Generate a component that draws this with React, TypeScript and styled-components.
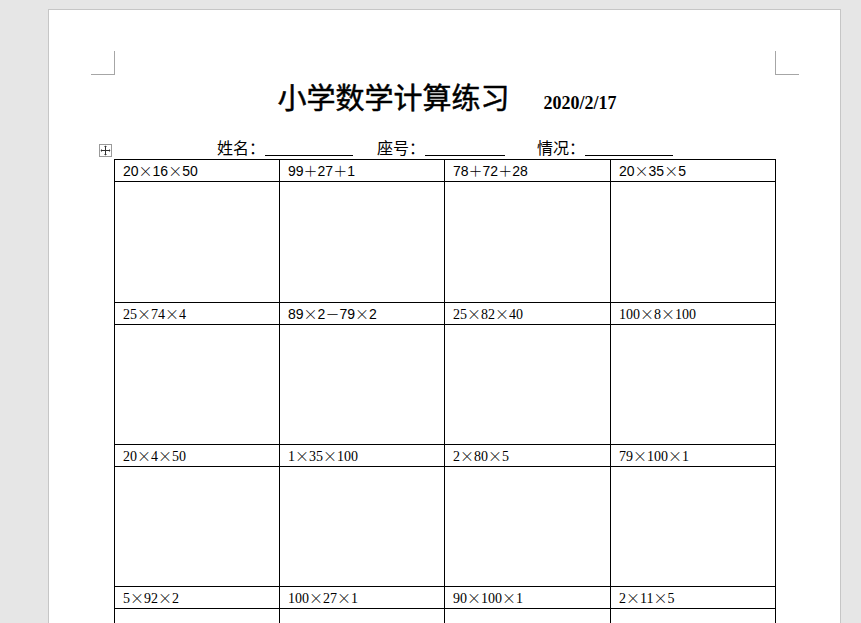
import React from "react";
import styled, { createGlobalStyle } from "styled-components";

const GlobalStyle = createGlobalStyle`
  html, body {
    margin: 0;
    padding: 0;
    background: #e6e6e6;
    overflow: hidden;
  }
  body {
    font-family: "Liberation Serif", "Noto Sans CJK SC", serif;
    color: #000;
  }
`;

const Viewport = styled.div`
  padding: 9px 0 0 48px;
  height: 623px;
  box-sizing: border-box;
`;

const Page = styled.div`
  position: relative;
  width: 793px;
  min-height: 700px;
  box-sizing: border-box;
  background: #fff;
  border: 1px solid #c6c6c6;
  padding: 67px 64px 0 65px;
`;

const CornerMark = styled.div<{ $side: "left" | "right" }>`
  position: absolute;
  top: 41px;
  left: ${(p) => (p.$side === "left" ? "42px" : "726px")};
  width: 23px;
  height: 23px;
  border-bottom: 1px solid #a6a6a6;
  ${(p) =>
    p.$side === "left"
      ? "border-right: 1px solid #a6a6a6;"
      : "border-left: 1px solid #a6a6a6;"}
`;

const TitleRow = styled.div`
  display: flex;
  justify-content: center;
  align-items: baseline;
  height: 40px;
  line-height: 38px;
  padding-left: 4px;
`;

const Title = styled.span`
  font-family: "Noto Sans CJK SC", sans-serif;
  font-weight: 400;
  font-size: 29px;
  -webkit-text-stroke: 0.5px #000;
`;

const DateText = styled.span`
  margin-left: 34px;
  font-family: "Liberation Serif", serif;
  font-weight: 700;
  font-size: 18px;
`;

const InfoRow = styled.div`
  margin-top: 20px;
  display: flex;
  justify-content: center;
  align-items: flex-start;
  height: 22px;
`;

const Label = styled.span<{ $gap?: number }>`
  font-family: "Noto Sans CJK SC", sans-serif;
  font-size: 16px;
  line-height: 20px;
  width: 48px;
  margin-left: ${(p) => p.$gap ?? 0}px;
`;

const Blank = styled.span<{ $w: number }>`
  display: inline-block;
  width: ${(p) => p.$w}px;
  height: 18px;
  border-bottom: 1px solid #000;
`;

const TableWrap = styled.div`
  position: relative;
`;

const MoveHandle = styled.div`
  position: absolute;
  left: -15px;
  top: -15px;
  width: 13px;
  height: 13px;
  box-sizing: border-box;
  border: 1px solid #9a9a9a;
  background: #fff;
  display: flex;
  align-items: center;
  justify-content: center;
`;

const Grid = styled.div`
  display: grid;
  grid-template-columns: 165px 165px 166px 165px;
  border-left: 1px solid #000;
  border-top: 1px solid #000;
`;

const HeadCell = styled.div<{ $sans: boolean }>`
  height: 22px;
  box-sizing: border-box;
  border-right: 1px solid #000;
  border-bottom: 1px solid #000;
  padding: 0 0 0 8px;
  line-height: 20px;
  font-size: 14px;
  white-space: nowrap;
  font-family: ${(p) =>
    p.$sans
      ? `"Liberation Sans", "Noto Sans CJK SC", sans-serif`
      : `"Liberation Serif", "Noto Sans CJK SC", serif`};
`;

const BodyCell = styled.div<{ $h: number }>`
  height: ${(p) => p.$h}px;
  box-sizing: border-box;
  border-right: 1px solid #000;
  border-bottom: 1px solid #000;
`;

const Op = styled.span`
  display: inline-block;
  width: 14px;
  text-align: center;
  font-family: "Noto Sans CJK SC", sans-serif;
  font-weight: 300;
  font-size: 14px;
`;

type Item = { expr: string; sans: boolean };

const rows: Item[][] = [
  [
    { expr: "20×16×50", sans: true },
    { expr: "99＋27＋1", sans: true },
    { expr: "78＋72＋28", sans: true },
    { expr: "20×35×5", sans: true },
  ],
  [
    { expr: "25×74×4", sans: false },
    { expr: "89×2－79×2", sans: true },
    { expr: "25×82×40", sans: false },
    { expr: "100×8×100", sans: false },
  ],
  [
    { expr: "20×4×50", sans: false },
    { expr: "1×35×100", sans: false },
    { expr: "2×80×5", sans: false },
    { expr: "79×100×1", sans: false },
  ],
  [
    { expr: "5×92×2", sans: false },
    { expr: "100×27×1", sans: false },
    { expr: "90×100×1", sans: false },
    { expr: "2×11×5", sans: false },
  ],
];

const renderExpr = (expr: string) =>
  expr.split(/([×＋－])/).map((part, i) =>
    /^[×＋－]$/.test(part) ? <Op key={i}>{part}</Op> : <span key={i}>{part}</span>
  );

const MoveIcon = () => (
  <svg width="11" height="11" viewBox="0 0 11 11" fill="none">
    <path d="M5.5 1v9M1 5.5h9" stroke="#333" strokeWidth="1" />
    <path d="M5.5 0.5L4 2h3zM5.5 10.5L4 9h3zM0.5 5.5L2 4v3zM10.5 5.5L9 4v3z" fill="#333" />
  </svg>
);

export default function App() {
  return (
    <>
      <GlobalStyle />
      <Viewport>
        <Page>
          <CornerMark $side="left" />
          <CornerMark $side="right" />
          <TitleRow>
            <Title>小学数学计算练习</Title>
            <DateText>2020/2/17</DateText>
          </TitleRow>
          <InfoRow>
            <Label>姓名：</Label>
            <Blank $w={88} />
            <Label $gap={24}>座号：</Label>
            <Blank $w={80} />
            <Label $gap={32}>情况：</Label>
            <Blank $w={88} />
          </InfoRow>
          <TableWrap>
            <MoveHandle>
              <MoveIcon />
            </MoveHandle>
            <Grid>
              {rows.map((row, r) => (
                <React.Fragment key={r}>
                  {row.map((item, c) => (
                    <HeadCell key={`h${c}`} $sans={item.sans}>
                      {renderExpr(item.expr)}
                    </HeadCell>
                  ))}
                  {row.map((_, c) => (
                    <BodyCell key={`b${c}`} $h={r === 0 ? 121 : 120} />
                  ))}
                </React.Fragment>
              ))}
            </Grid>
          </TableWrap>
        </Page>
      </Viewport>
    </>
  );
}
